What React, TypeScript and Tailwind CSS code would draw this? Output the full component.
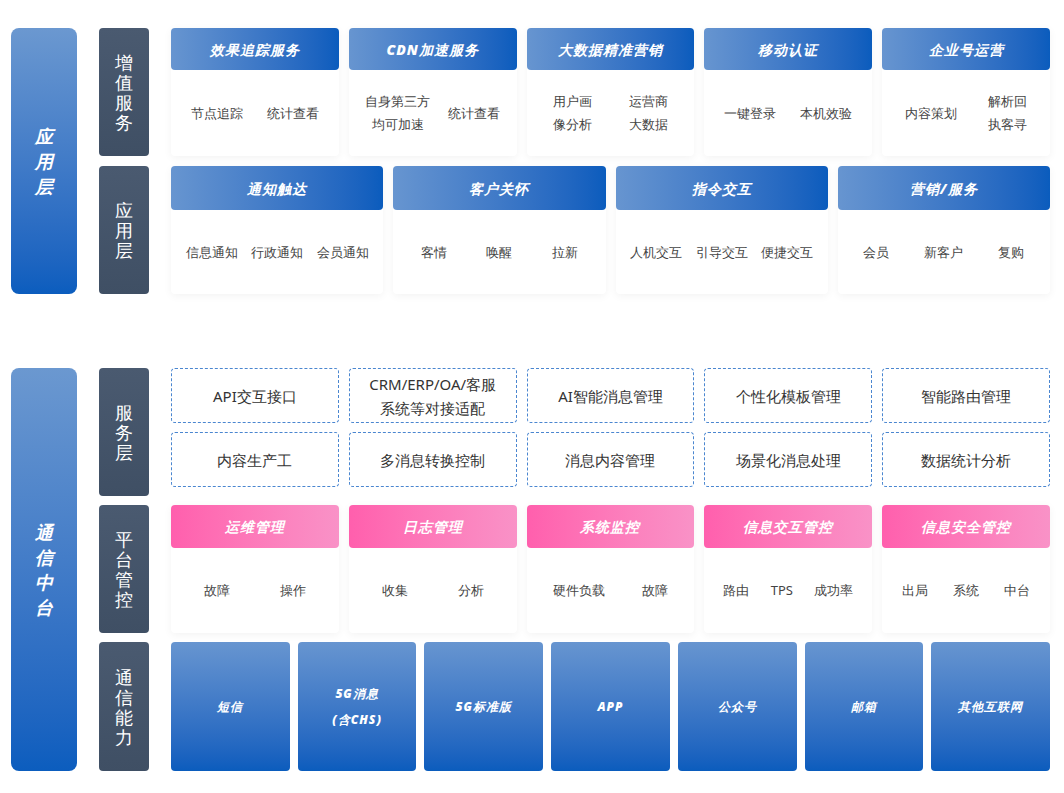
import React from 'react';

const font = "font-['Noto_Sans_CJK_SC','Noto_Sans',sans-serif]";
const blueHead = 'bg-gradient-to-r from-[#6795d0] to-[#0a5cbd]';
const pinkHead = 'bg-gradient-to-r from-[#ff5fad] to-[#f992c7]';

const Side = ({ text, h }: { text: string; h: string }) => (
  <div className={`w-[50px] ${h} shrink-0 rounded-[4px] bg-gradient-to-b from-[#4a5a70] to-[#3f4f64] flex items-center justify-center`}>
    <div className="flex flex-col items-center text-white text-[18px] leading-[20px]">
      {text.split('').map((c, i) => <span key={i} className="h-[20px] leading-[20px]">{c}</span>)}
    </div>
  </div>
);

const Big = ({ text, h }: { text: string; h: string }) => (
  <div className={`w-[66px] ${h} rounded-[8px] bg-gradient-to-b from-[#6b98d0] to-[#0b5dbe] flex items-center justify-center`}>
    <div className="flex flex-col items-center text-white text-[18px] leading-[25px] font-black italic">
      {text.split('').map((c, i) => <span key={i}>{c}</span>)}
    </div>
  </div>
);

type CardT = { title: string; items: string[][] };

const Card = ({ c, head, hh }: { c: CardT; head: string; hh: string }) => (
  <div className="flex flex-col h-full bg-white shadow-[0_2px_8px_rgba(0,0,0,0.05)] rounded-[4px]">
    <div className={`${head} ${hh} rounded-[4px] flex items-center justify-center text-white text-[14px] font-black italic tracking-[1px]`}>{c.title}</div>
    <div className="flex-1 flex items-center justify-around px-2 text-[13px] text-[#444] leading-[23px]">
      {c.items.map((it, i) => (
        <div key={i} className="flex flex-col items-center">{it.map((t) => <span key={t}>{t}</span>)}</div>
      ))}
    </div>
  </div>
);

const row1: CardT[] = [
  { title: '效果追踪服务', items: [['节点追踪'], ['统计查看']] },
  { title: 'CDN加速服务', items: [['自身第三方', '均可加速'], ['统计查看']] },
  { title: '大数据精准营销', items: [['用户画', '像分析'], ['运营商', '大数据']] },
  { title: '移动认证', items: [['一键登录'], ['本机效验']] },
  { title: '企业号运营', items: [['内容策划'], ['解析回', '执客寻']] },
];
const row2: CardT[] = [
  { title: '通知触达', items: [['信息通知'], ['行政通知'], ['会员通知']] },
  { title: '客户关怀', items: [['客情'], ['唤醒'], ['拉新']] },
  { title: '指令交互', items: [['人机交互'], ['引导交互'], ['便捷交互']] },
  { title: '营销/服务', items: [['会员'], ['新客户'], ['复购']] },
];
const pink: CardT[] = [
  { title: '运维管理', items: [['故障'], ['操作']] },
  { title: '日志管理', items: [['收集'], ['分析']] },
  { title: '系统监控', items: [['硬件负载'], ['故障']] },
  { title: '信息交互管控', items: [['路由'], ['TPS'], ['成功率']] },
  { title: '信息安全管控', items: [['出局'], ['系统'], ['中台']] },
];
const svc = [
  'API交互接口', 'CRM/ERP/OA/客服\n系统等对接适配', 'AI智能消息管理', '个性化模板管理', '智能路由管理',
  '内容生产工', '多消息转换控制', '消息内容管理', '场景化消息处理', '数据统计分析',
];
const comm = ['短信', '5G消息\n(含CHS)', '5G标准版', 'APP', '公众号', '邮箱', '其他互联网'];

export default function App() {
  return (
    <div className={`${font} w-[1064px] h-[793px] bg-white pl-[11px] pt-[28px]`}>
      <div className="flex gap-[22px]">
        <Big text="应用层" h="h-[266px]" />
        <div className="flex flex-col gap-[10px]">
          <div className="flex gap-[22px] h-[128px]">
            <Side text="增值服务" h="h-[128px]" />
            <div className="grid grid-cols-5 gap-[10px] w-[879px]">
              {row1.map((c) => <Card key={c.title} c={c} head={blueHead} hh="h-[42px]" />)}
            </div>
          </div>
          <div className="flex gap-[22px] h-[128px]">
            <Side text="应用层" h="h-[128px]" />
            <div className="grid grid-cols-4 gap-[10px] w-[879px]">
              {row2.map((c) => <Card key={c.title} c={c} head={blueHead} hh="h-[44px]" />)}
            </div>
          </div>
        </div>
      </div>

      <div className="flex gap-[22px] mt-[74px]">
        <Big text="通信中台" h="h-[403px]" />
        <div className="flex flex-col gap-[9px]">
          <div className="flex gap-[22px] h-[128px] items-start">
            <Side text="服务层" h="h-[128px]" />
            <div className="grid grid-cols-5 grid-rows-2 gap-x-[10px] gap-y-[9px] w-[879px] h-[119px]">
              {svc.map((s) => (
                <div key={s} className="border border-dashed border-[#4a86d0] rounded-[4px] flex flex-col items-center justify-center text-[15px] text-[#333] leading-[24px]">
                  {s.split('\n').map((l) => <span key={l}>{l}</span>)}
                </div>
              ))}
            </div>
          </div>
          <div className="flex gap-[22px] h-[128px]">
            <Side text="平台管控" h="h-[128px]" />
            <div className="grid grid-cols-5 gap-[10px] w-[879px]">
              {pink.map((c) => <Card key={c.title} c={c} head={pinkHead} hh="h-[43px]" />)}
            </div>
          </div>
          <div className="flex gap-[22px] h-[129px]">
            <Side text="通信能力" h="h-[129px]" />
            <div className="grid grid-cols-7 gap-[8px] w-[879px]">
              {comm.map((s) => (
                <div key={s} className="rounded-[4px] bg-gradient-to-b from-[#6795d0] to-[#0a5cbd] flex flex-col items-center justify-center text-white text-[12px] font-black italic tracking-[1px] leading-[26px]">
                  {s.split('\n').map((l) => <span key={l}>{l}</span>)}
                </div>
              ))}
            </div>
          </div>
        </div>
      </div>
    </div>
  );
}
